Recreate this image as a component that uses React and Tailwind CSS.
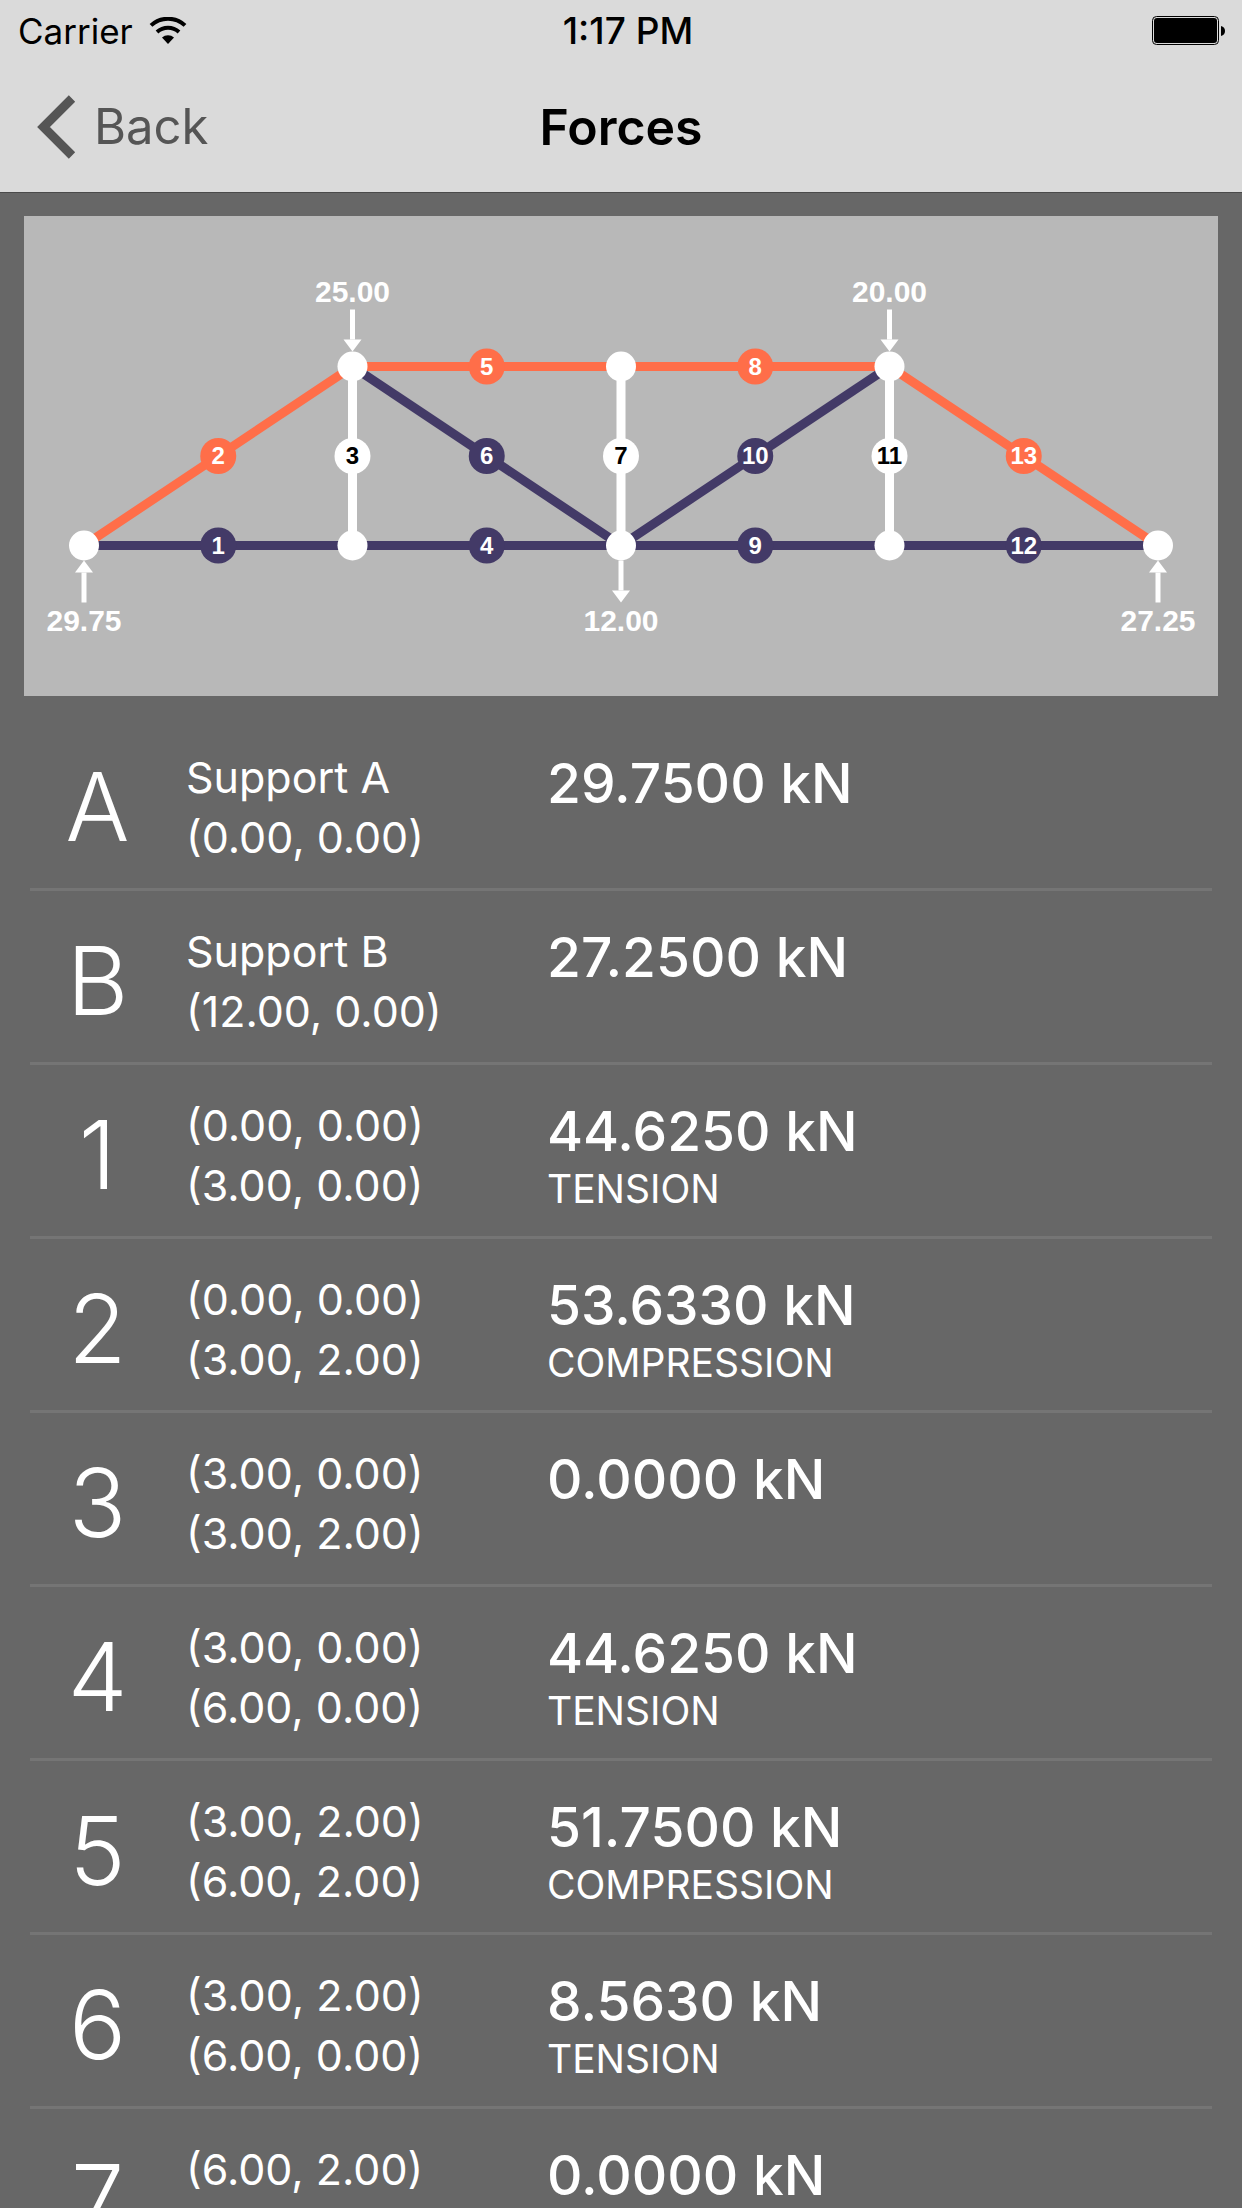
import React from 'react';

const COLORS = {
  tension: '#433a67',
  compression: '#ff6e49',
  none: '#ffffff',
};

const members = [
  { id: 1, from: [0, 0], to: [3, 0], force: '44.6250', type: 'tension' },
  { id: 2, from: [0, 0], to: [3, 2], force: '53.6330', type: 'compression' },
  { id: 3, from: [3, 0], to: [3, 2], force: '0.0000', type: 'none' },
  { id: 4, from: [3, 0], to: [6, 0], force: '44.6250', type: 'tension' },
  { id: 5, from: [3, 2], to: [6, 2], force: '51.7500', type: 'compression' },
  { id: 6, from: [3, 2], to: [6, 0], force: '8.5630', type: 'tension' },
  { id: 7, from: [6, 2], to: [6, 0], force: '0.0000', type: 'none' },
  { id: 8, from: [6, 2], to: [9, 2], type: 'compression' },
  { id: 9, from: [6, 0], to: [9, 0], type: 'tension' },
  { id: 10, from: [6, 0], to: [9, 2], type: 'tension' },
  { id: 11, from: [9, 0], to: [9, 2], type: 'none' },
  { id: 12, from: [9, 0], to: [12, 0], type: 'tension' },
  { id: 13, from: [9, 2], to: [12, 0], type: 'compression' },
];

const nodes = [[0, 0], [3, 0], [6, 0], [9, 0], [12, 0], [3, 2], [6, 2], [9, 2]];

// side: which side of the node the arrow sits on, dir: where it points
const loads = [
  { at: [3, 2], value: '25.00', side: 'above', dir: 'down' },
  { at: [9, 2], value: '20.00', side: 'above', dir: 'down' },
  { at: [6, 0], value: '12.00', side: 'below', dir: 'down' },
  { at: [0, 0], value: '29.75', side: 'below', dir: 'up' },
  { at: [12, 0], value: '27.25', side: 'below', dir: 'up' },
];

const supports = [
  { id: 'A', name: 'Support A', at: [0, 0], force: '29.7500' },
  { id: 'B', name: 'Support B', at: [12, 0], force: '27.2500' },
];

const toX = (x) => 60 + x * 89.5;
const toY = (y) => 329.5 - y * 89.5;

const coords = ([x, y]) => `(${x.toFixed(2)}, ${y.toFixed(2)})`;

const rows = [
  ...supports.map((s) => ({ id: s.id, lines: [s.name, coords(s.at)], force: s.force })),
  ...members.filter((m) => m.force).map((m) => ({
    id: m.id,
    lines: [coords(m.from), coords(m.to)],
    force: m.force,
    type: m.type === 'none' ? null : m.type,
  })),
];

const StatusBar = () => (
  <div className="grid grid-cols-3 items-center h-[62px] pl-[18px] pr-[16px]">
    <div className="flex items-center gap-4 text-[35px] leading-[42px]">
      <span>Carrier</span>
      <svg width="38" height="28" viewBox="0 0 38 28" fill="none" stroke="#000" aria-hidden="true">
        <path d="M2 8.4 A25 25 0 0 1 36 8.4" strokeWidth="4" />
        <path d="M8 15 A16.5 16.5 0 0 1 30 15" strokeWidth="4" />
        <path d="M13 20.6 A9 9 0 0 1 25 20.6 L19 27 Z" fill="#000" stroke="none" />
      </svg>
    </div>
    <span className="pl-3 text-center font-medium text-[37px] leading-[42px]">1:17 PM</span>
    <svg className="justify-self-end" width="74" height="30" viewBox="0 0 74 30" aria-hidden="true">
      <rect x="0.5" y="0.5" width="66" height="28" rx="4" fill="none" stroke="#000" />
      <rect x="2" y="2" width="63" height="25" rx="3" fill="#000" />
      <path d="M69 10 Q73 11 73 15 Q73 19 69 20 Z" fill="#000" />
    </svg>
  </div>
);

const NavBar = () => (
  <nav className="grid grid-cols-3 items-center h-[130px] px-9 pb-px">
    <button type="button" className="flex items-center gap-[18px] text-[#555555] text-[49px] leading-[60px]">
      <svg width="40" height="64" viewBox="0 0 40 64" fill="none" stroke="currentColor" strokeWidth="9" aria-hidden="true">
        <path d="M36 3.5 L7.5 32 L36 60.5" />
      </svg>
      Back
    </button>
    <h1 className="text-center font-semibold text-[50px] leading-[60px]">Forces</h1>
  </nav>
);

const LoadArrow = ({ load }) => {
  const x = toX(load.at[0]);
  const y = toY(load.at[1]);
  const top = load.side === 'above' ? y - 57 : y + 15;
  const bottom = top + 42;
  const tip = load.dir === 'down' ? bottom : top;
  const base = load.dir === 'down' ? bottom - 12 : top + 12;
  const tail = load.dir === 'down' ? top : bottom;
  return (
    <g fill="#fff">
      <line x1={x} y1={tail} x2={x} y2={base} stroke="#fff" strokeWidth="5" />
      <polygon points={`${x - 9},${base} ${x + 9},${base} ${x},${tip}`} />
      <text x={x} y={load.side === 'above' ? y - 65 : y + 85} fontSize="30">{load.value}</text>
    </g>
  );
};

const Truss = () => (
  <svg
    viewBox="0 0 1194 480"
    className="block w-full bg-[#b8b8b8] font-['Liberation_Sans',Arial,sans-serif] font-bold"
    textAnchor="middle"
    role="img"
    aria-label="Truss diagram"
  >
    {members.map((m) => (
      <line
        key={m.id}
        x1={toX(m.from[0])}
        y1={toY(m.from[1])}
        x2={toX(m.to[0])}
        y2={toY(m.to[1])}
        stroke={COLORS[m.type]}
        strokeWidth="9"
      />
    ))}
    {nodes.map(([x, y]) => (
      <circle key={`${x}-${y}`} cx={toX(x)} cy={toY(y)} r="15" fill="#fff" />
    ))}
    {members.map((m) => {
      const cx = toX((m.from[0] + m.to[0]) / 2);
      const cy = toY((m.from[1] + m.to[1]) / 2);
      return (
        <g key={m.id}>
          <circle cx={cx} cy={cy} r="18" fill={COLORS[m.type]} />
          <text x={cx} y={cy + 8} fontSize="24" fill={m.type === 'none' ? '#000' : '#fff'}>{m.id}</text>
        </g>
      );
    })}
    {loads.map((l) => <LoadArrow key={l.value} load={l} />)}
  </svg>
);

const ForceRow = ({ row }) => (
  <tr className="h-[174px] align-top">
    <th scope="row" className="w-[135px] pt-[33px] border-b-3 border-[#757575] text-center font-light text-[95px] leading-[114px]">
      {row.id}
    </th>
    <td className="w-[382px] pt-[30px] pl-[21px] border-b-3 border-[#757575] text-[43px] leading-[60px]">
      {row.lines.map((line, i) => <div key={i}>{line}</div>)}
    </td>
    <td className="pt-[33px] border-b-3 border-[#757575]">
      <div className="font-medium text-[55px] leading-[66px]">{row.force} kN</div>
      {row.type && <div className="uppercase text-[39px] leading-[50px]">{row.type}</div>}
    </td>
  </tr>
);

export default function App() {
  return (
    <div className="flex flex-col h-screen overflow-hidden bg-[#676767] font-['Inter',sans-serif] text-white">
      <header className="shrink-0 bg-[#dadada] text-black border-b border-[#4a4a4a]">
        <StatusBar />
        <NavBar />
      </header>
      <main className="flex-1 min-h-0 overflow-hidden">
        <div className="px-6 pt-[23px]">
          <Truss />
        </div>
        <div className="px-[30px] pt-[21px]">
          <table className="w-full border-separate border-spacing-0">
            <tbody>
              {rows.map((row) => <ForceRow key={row.id} row={row} />)}
            </tbody>
          </table>
        </div>
      </main>
    </div>
  );
}
